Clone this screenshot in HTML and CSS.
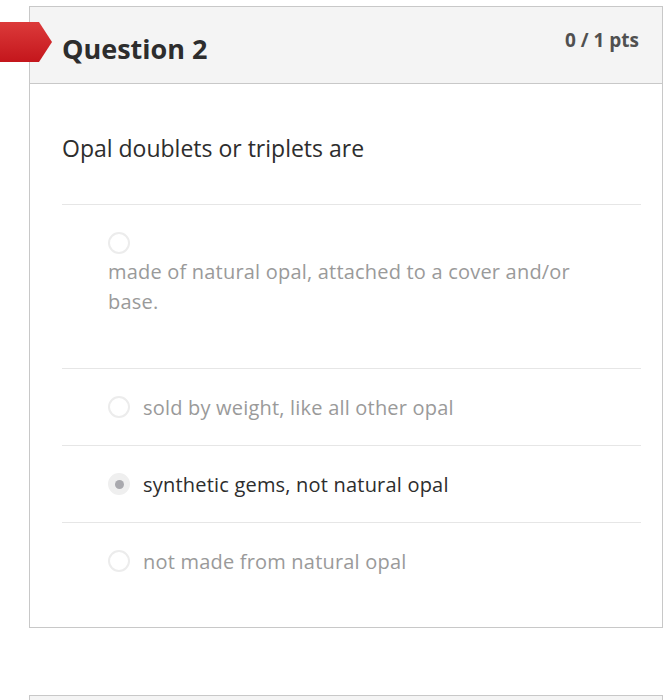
FILE: index.html
```html
<!DOCTYPE html>
<html>
<head>
<meta charset="utf-8">
<link rel="stylesheet" href="styles.css">
</head>
<body>
<div class="page">
  <div class="card">
    <div class="flag"></div>
    <div class="card-header">
      <h2 class="q-title">Question 2</h2>
      <div class="pts">0 / 1 pts</div>
    </div>
    <div class="card-body">
      <p class="q-text">Opal doublets or triplets are</p>
      <div class="answers">
        <div class="answer answer-stacked">
          <span class="radio"></span>
          <span class="a-text">made of natural opal, attached to a cover and/or base.</span>
        </div>
        <div class="answer">
          <span class="radio"></span>
          <span class="a-text">sold by weight, like all other opal</span>
        </div>
        <div class="answer selected">
          <span class="radio"><span class="dot"></span></span>
          <span class="a-text">synthetic gems, not natural opal</span>
        </div>
        <div class="answer last">
          <span class="radio"></span>
          <span class="a-text">not made from natural opal</span>
        </div>
      </div>
    </div>
  </div>
  <div class="card card-next"></div>
</div>
</body>
</html>
```

FILE: styles.css
```css
html, body {
  margin: 0;
  padding: 0;
  background: #fff;
}
body {
  font-family: "Open Sans", "Lato", sans-serif;
  color: #2d2d2d;
  overflow: hidden;
}
.page {
  padding-top: 6px;
  padding-left: 29px;
  width: 634px;
}
.card {
  position: relative;
  border: 1px solid #c8c8c8;
  box-sizing: border-box;
  width: 634px;
  height: 622px;
  background: #fff;
}
.flag {
  position: absolute;
  left: -30px;
  top: 15px;
  width: 52px;
  height: 40px;
  background: linear-gradient(#dc3a3a, #c4161c);
  clip-path: polygon(0 0, 39px 0, 52px 50%, 39px 100%, 0 100%);
}
.card-header {
  height: 77px;
  box-sizing: border-box;
  background: #f4f4f4;
  border-bottom: 1px solid #c8c8c8;
  display: flex;
  justify-content: space-between;
  align-items: flex-start;
  padding: 0 23px 0 32px;
}
.q-title {
  margin: 24px 0 0;
  font-size: 27px;
  font-weight: 700;
  color: #2d2d2d;
  line-height: 36px;
}
.pts {
  margin-top: 19px;
  font-size: 19px;
  font-weight: 700;
  color: #505050;
  line-height: 28px;
}
.card-body {
  padding: 0 21px 0 32px;
}
.q-text {
  margin: 0;
  padding: 49px 0 41px;
  font-size: 23px;
  line-height: 30px;
  color: #2d2d2d;
  border-bottom: 1px solid #e6e6e6;
}
.answer {
  display: flex;
  align-items: center;
  gap: 13px;
  padding: 0 0 0 46px;
  height: 76px;
  border-bottom: 1px solid #e6e6e6;
  font-size: 20px;
  letter-spacing: 0.2px;
  color: #9a9a9a;
}
.answer.last {
  border-bottom: none;
}
.answer-stacked {
  display: block;
  height: auto;
  padding-top: 27px;
  padding-bottom: 51px;
}
.answer-stacked .a-text {
  display: block;
  max-width: 470px;
  line-height: 30px;
  margin-top: 3px;
}
.radio {
  width: 22px;
  height: 22px;
  box-sizing: border-box;
  border: 2px solid #ececec;
  border-radius: 50%;
  display: flex;
  align-items: center;
  justify-content: center;
  flex: none;
}
.selected .radio {
  background: #efefef;
  border-color: #efefef;
}
.dot {
  width: 9px;
  height: 9px;
  border-radius: 50%;
  background: #a9a9ae;
}
.selected .a-text {
  color: #2d2d2d;
}
.card-next {
  margin-top: 67px;
  height: 40px;
  background: #f4f4f4;
}
```
